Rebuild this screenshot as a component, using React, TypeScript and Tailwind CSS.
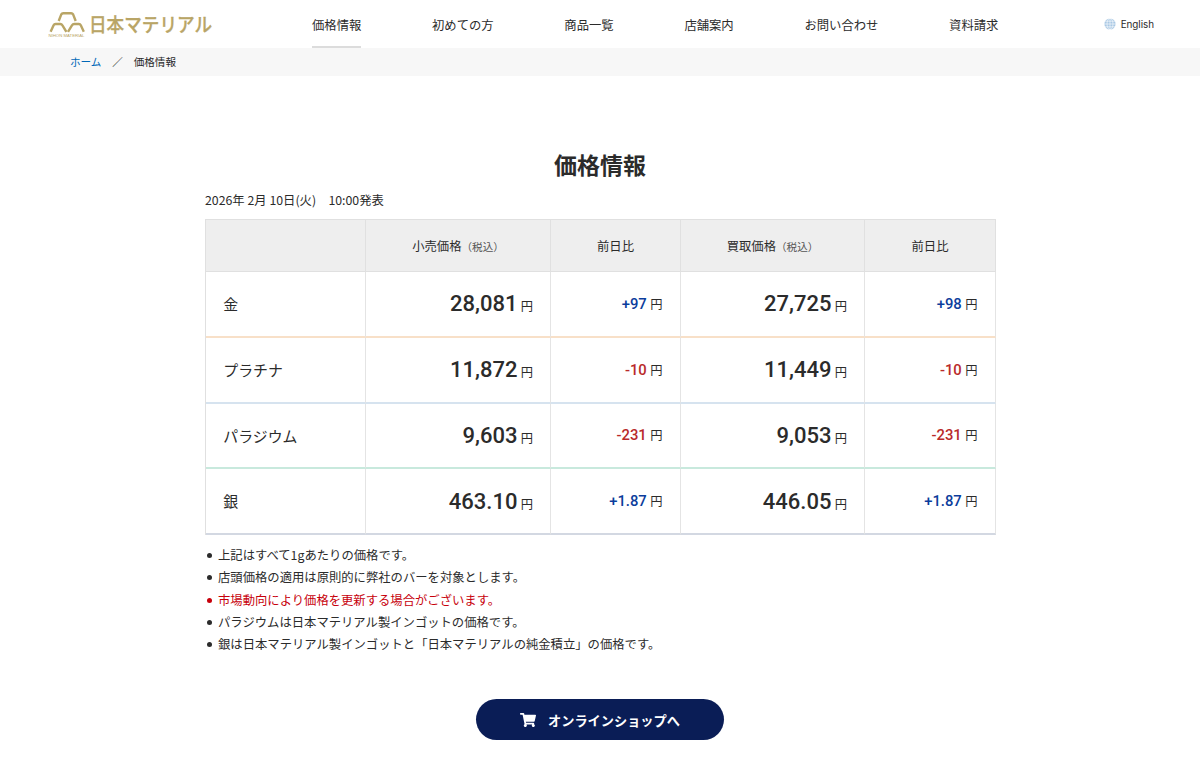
import clsx from 'clsx';
import { FaShoppingCart } from 'react-icons/fa';

type Price = {
  name: string;
  retail: string;
  retailDiff: string;
  buy: string;
  buyDiff: string;
  border: string;
};

const navItems = [
  { label: '価格情報', active: true },
  { label: '初めての方', active: false },
  { label: '商品一覧', active: false },
  { label: '店舗案内', active: false },
  { label: 'お問い合わせ', active: false },
  { label: '資料請求', active: false },
];

const prices: Price[] = [
  { name: '金', retail: '28,081', retailDiff: '+97', buy: '27,725', buyDiff: '+98', border: '[&>td]:border-b-[#f8e0c8]' },
  { name: 'プラチナ', retail: '11,872', retailDiff: '-10', buy: '11,449', buyDiff: '-10', border: '[&>td]:border-b-[#d6e3ef]' },
  { name: 'パラジウム', retail: '9,603', retailDiff: '-231', buy: '9,053', buyDiff: '-231', border: '[&>td]:border-b-[#c8e9dd]' },
  { name: '銀', retail: '463.10', retailDiff: '+1.87', buy: '446.05', buyDiff: '+1.87', border: '[&>td]:border-b-[#d3d8e2]' },
];

const notes = [
  { text: '上記はすべて1gあたりの価格です。' },
  { text: '店頭価格の適用は原則的に弊社のバーを対象とします。' },
  { text: '市場動向により価格を更新する場合がございます。', alert: true },
  { text: 'パラジウムは日本マテリアル製インゴットの価格です。' },
  { text: '銀は日本マテリアル製インゴットと「日本マテリアルの純金積立」の価格です。' },
];

const Logo = () => (
  <svg width="180" height="48" viewBox="0 -9 180 48" className="ml-12 shrink-0 overflow-visible" fill="none">
    <g stroke="#b9a566" strokeWidth="2.4" strokeLinejoin="round">
      <path d="M10.7 12 13.3 5.4Q13.9 4.2 15.2 4.2H23.2Q24.5 4.2 25.1 5.4L27.7 12" />
      <path d="M2.6 22.8 5.6 16.2Q6.2 15 7.5 15H12.3Q13.6 15 14.3 16.2L18.4 22.8" />
      <path d="M20 22.8 24.1 16.2Q24.8 15 26.1 15H30.9Q32.2 15 32.8 16.2L35.8 22.8" />
    </g>
    <text x="0.5" y="27.6" fontSize="4.2" fill="#b9a566" textLength="36" lengthAdjust="spacingAndGlyphs" fontFamily="Liberation Sans, sans-serif">
      NIHON MATERIAL
    </text>
    <text x="41" y="23" fontSize="19.5" fontWeight="500" fill="#b9a566" stroke="#b9a566" strokeWidth="0.3" textLength="123" lengthAdjust="spacingAndGlyphs" fontFamily="Noto Sans CJK JP, sans-serif">
      日本マテリアル
    </text>
  </svg>
);

const GlobeIcon = () => (
  <svg width="12" height="12" viewBox="0 0 12 12" className="mr-[5px]">
    <circle cx="6" cy="6" r="5.6" fill="#a9c8e4" />
    <g stroke="#fff" strokeWidth="0.6" fill="none">
      <path d="M6 0v12M0 6h12M1 3.2h10M1 8.8h10" />
      <ellipse cx="6" cy="6" rx="3" ry="5.6" />
    </g>
  </svg>
);

const Amount = ({ value }: { value: string }) => (
  <td className="pr-[17px] text-right text-[12.3px]">
    <span className="mr-[0.5px] font-['Roboto'] text-[22px] font-medium">{value}</span> 円
  </td>
);

const Diff = ({ value }: { value: string }) => (
  <td className="pr-[17.5px] text-right text-[12.3px]">
    <span
      className={clsx(
        "mr-[0.7px] font-['Roboto'] text-[14.8px] font-medium",
        value.startsWith('+') ? 'text-[#0b3d9c]' : 'text-[#b92a2a]'
      )}
    >
      {value}
    </span>{' '}
    円
  </td>
);

const PriceTable = () => (
  <table className="w-[791px] table-fixed border-separate border-spacing-0 border-l border-l-[#e0e0e0]">
    <colgroup>
      <col className="w-[160px]" />
      <col className="w-[185px]" />
      <col className="w-[130px]" />
      <col className="w-[184px]" />
      <col className="w-[131px]" />
    </colgroup>
    <thead>
      <tr className="h-[53px] bg-[#eee] [&>th]:border-y [&>th]:border-r [&>th]:border-[#e0e0e0] [&>th]:pt-[2px] [&>th]:font-normal">
        <th></th>
        <th>
          小売価格<span className="text-[10.6px] text-[#555]">（税込）</span>
        </th>
        <th>前日比</th>
        <th>
          買取価格<span className="text-[10.6px] text-[#555]">（税込）</span>
        </th>
        <th>前日比</th>
      </tr>
    </thead>
    <tbody>
      {prices.map((price) => (
        <tr
          key={price.name}
          className={clsx(
            'h-[65.75px] [&>td]:border-r [&>td]:border-b-2 [&>td]:border-r-[#e4e4e4] [&>td]:py-0',
            price.border
          )}
        >
          <td className="pl-[17.3px] text-[14.9px]">
            <span className="inline-block pt-px">{price.name}</span>
          </td>
          <Amount value={price.retail} />
          <Diff value={price.retailDiff} />
          <Amount value={price.buy} />
          <Diff value={price.buyDiff} />
        </tr>
      ))}
    </tbody>
  </table>
);

export default function App() {
  return (
    <div className="min-h-[782px] bg-white font-['Noto_Sans_CJK_JP',sans-serif] text-[12.33px] text-[#2b2b2b]">
      <header className="flex h-12">
        <Logo />
        <nav className="ml-[84px] flex gap-[70.7px]">
          {navItems.map((item) => (
            <a
              key={item.label}
              href="#"
              className={clsx(
                'flex h-12 items-center border-b-2 pt-1 whitespace-nowrap',
                item.active ? 'border-[#dcdcdc]' : 'border-transparent'
              )}
            >
              {item.label}
            </a>
          ))}
        </nav>
        <a href="#" className="mr-[46px] ml-auto flex items-center font-['Inter'] text-[9.9px] tracking-[-0.05px]">
          <GlobeIcon />
          <span className="pt-px">English</span>
        </a>
      </header>

      <div className="flex h-7 items-center bg-[#f7f7f7] pl-[70px] text-[10.6px]">
        <a href="#" className="text-[#0068b7]">ホーム</a>
        <span className="mx-[10.8px]">／</span>
        <span>価格情報</span>
      </div>

      <main className="mx-auto w-[790px] pt-[70px]">
        <h1 className="text-center text-[23px] leading-9 font-bold">価格情報</h1>
        <p className="mt-[8px] mb-[8px] leading-[21px]">2026年 2月 10日(火)　10:00発表</p>
        <PriceTable />
        <ul className="mt-[9px]">
          {notes.map((note) => (
            <li key={note.text} className={clsx('flex h-[22.3px] items-center', note.alert && 'text-[#c7000b]')}>
              <span className="mt-px mr-[6px] ml-[2px] size-[5px] rounded-full bg-current"></span>
              {note.text}
            </li>
          ))}
        </ul>
        <a
          href="#"
          className="mx-auto mt-[44px] flex h-[41px] w-[248px] items-center justify-center rounded-full bg-[#0a1d56] text-[13.2px] font-bold text-white"
        >
          <FaShoppingCart className="mt-px mr-3 size-4" />
          <span className="pt-px">オンラインショップへ</span>
        </a>
      </main>
    </div>
  );
}
